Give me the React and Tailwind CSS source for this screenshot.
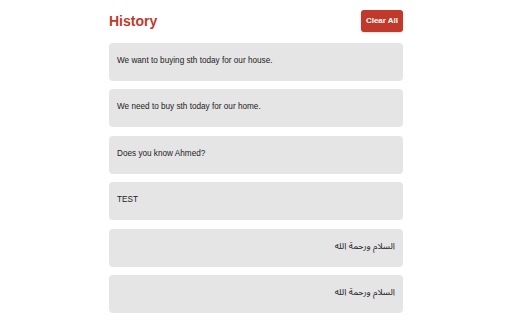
import React from 'react';

const items = [
  { text: 'We want to buying sth today for our house.' },
  { text: 'We need to buy sth today for our home.' },
  { text: 'Does you know Ahmed?' },
  { text: 'TEST' },
  { text: 'السلام ورحمة الله', rtl: true },
  { text: 'السلام ورحمة الله', rtl: true },
];

const App = () => {
  return (
    <div className="min-h-[320px] bg-white font-['Liberation_Sans','Noto_Sans',sans-serif]">
      <div className="mx-auto w-[294px] pt-[10px]">
        <div className="flex items-center justify-between h-[22px] mb-[11px]">
          <h2 className="text-[14px] font-bold text-[#c0392b] leading-none">History</h2>
          <button className="h-[22px] w-[42px] rounded-[3px] bg-[#c0392b] text-white text-[8px] font-bold shadow-sm">
            Clear All
          </button>
        </div>
        <div className="flex flex-col gap-[8.4px]">
          {items.map((item, index) => (
            <div
              key={index}
              dir={item.rtl ? 'rtl' : 'ltr'}
              className={`h-[38px] rounded-[4px] bg-[#e5e5e5] px-2 pt-[12px] leading-[11px] text-[#222] font-['Liberation_Sans','Noto_Sans_Arabic','DejaVu_Sans',sans-serif] ${
                item.rtl ? 'text-[9px]' : 'text-[8.2px]'
              }`}
            >
              {item.text}
            </div>
          ))}
        </div>
      </div>
    </div>
  );
};

export default App;
